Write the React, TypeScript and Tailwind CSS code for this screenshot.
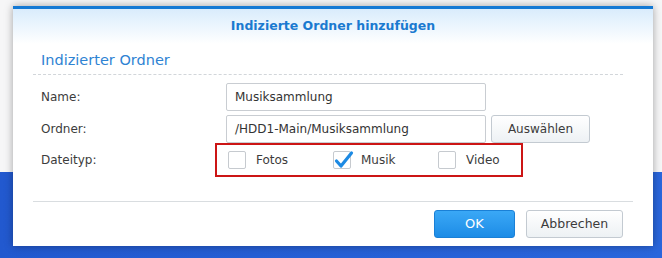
import React from 'react';

const font = { fontFamily: '"DejaVu Sans", Verdana, sans-serif' };

const Checkbox = ({ label, checked }: { label: string; checked?: boolean }) => (
  <div className="w-[105px] flex items-center shrink-0">
    <div className="relative w-[18px] h-[18px] border border-[#c6cacf] bg-white rounded-[2px] shrink-0">
      {checked && (
        <svg className="absolute -left-[1px] -top-[3px]" width="22" height="22" viewBox="0 0 22 22">
          <path d="M3.5 12 L8 17 L18.5 4" fill="none" stroke="#1d8ae3" strokeWidth="3.2" strokeLinecap="round" strokeLinejoin="round" />
        </svg>
      )}
    </div>
    <span className="ml-[10px] text-[12px] text-[#3c3c3c]">{label}</span>
  </div>
);

export default function App() {
  return (
    <div className="relative w-[662px] h-[258px] overflow-hidden" style={font}>
      <div className="flex flex-col h-full">
        <div className="h-[172px] bg-[#f6f6f7]" />
        <div className="flex-1 bg-gradient-to-r from-[#2259cf] to-[#2a66dc]" />
      </div>

      <div className="absolute left-[13px] top-[6px] w-[640px] h-[240px] bg-white border-t-[3px] border-[#1479d4] shadow-[0_0_8px_rgba(0,0,0,0.35)] flex flex-col">
        <div className="h-[35px] bg-gradient-to-b from-[#d9ecfc] to-white flex items-center justify-center">
          <span className="text-[12.5px] font-bold text-[#1a7ad0]">Indizierte Ordner hinzufügen</span>
        </div>

        <div className="px-[20px] flex flex-col">
          <div className="mt-[7px] pl-[8px] h-[18px] leading-[18px] text-[14.5px] text-[#2f83d3]">Indizierter Ordner</div>
          <div className="mt-[5px] mr-[10px] border-t border-dashed border-[#d2d6da]" />

          <div className="mt-[8px] flex items-center h-[28px]">
            <div className="w-[193px] pl-[8px] text-[12px] text-[#3c3c3c]">Name:</div>
            <div className="w-[260px] h-[28px] border border-[#c9cdd2] rounded-[2px] bg-white pl-[8px] flex items-center text-[12px] text-[#333]">
              Musiksammlung
            </div>
          </div>

          <div className="mt-[4px] flex items-center h-[28px]">
            <div className="w-[193px] pl-[8px] text-[12px] text-[#3c3c3c]">Ordner:</div>
            <div className="w-[260px] h-[28px] border border-[#c9cdd2] rounded-[2px] bg-white pl-[8px] flex items-center text-[12px] text-[#333]">
              /HDD1-Main/Musiksammlung
            </div>
            <button className="ml-[5px] w-[99px] h-[28px] border border-[#c3cad1] rounded-[3px] bg-gradient-to-b from-white to-[#edf1f4] text-[12px] text-[#3c3c3c]">
              Auswählen
            </button>
          </div>

          <div className="flex items-center h-[34px]">
            <div className="w-[182px] pl-[8px] text-[12px] text-[#3c3c3c]">Dateityp:</div>
            <div className="w-[308px] h-[34px] border-2 border-[#cc1515] flex items-center pl-[11px]">
              <Checkbox label="Fotos" />
              <Checkbox label="Musik" checked />
              <Checkbox label="Video" />
            </div>
          </div>

          <div className="mt-[24px] border-t border-[#d9dde0]" />

          <div className="mt-[8px] pr-[10px] flex justify-end gap-[11px]">
            <button className="w-[81px] h-[28px] rounded-[3px] border border-[#1a80d6] bg-gradient-to-b from-[#3aa8f6] to-[#1c8ce6] text-[13px] text-white">
              OK
            </button>
            <button className="w-[97px] h-[28px] rounded-[3px] border border-[#c3cad1] bg-gradient-to-b from-white to-[#edf1f4] text-[12.5px] text-[#3c3c3c]">
              Abbrechen
            </button>
          </div>
        </div>
      </div>
    </div>
  );
}
